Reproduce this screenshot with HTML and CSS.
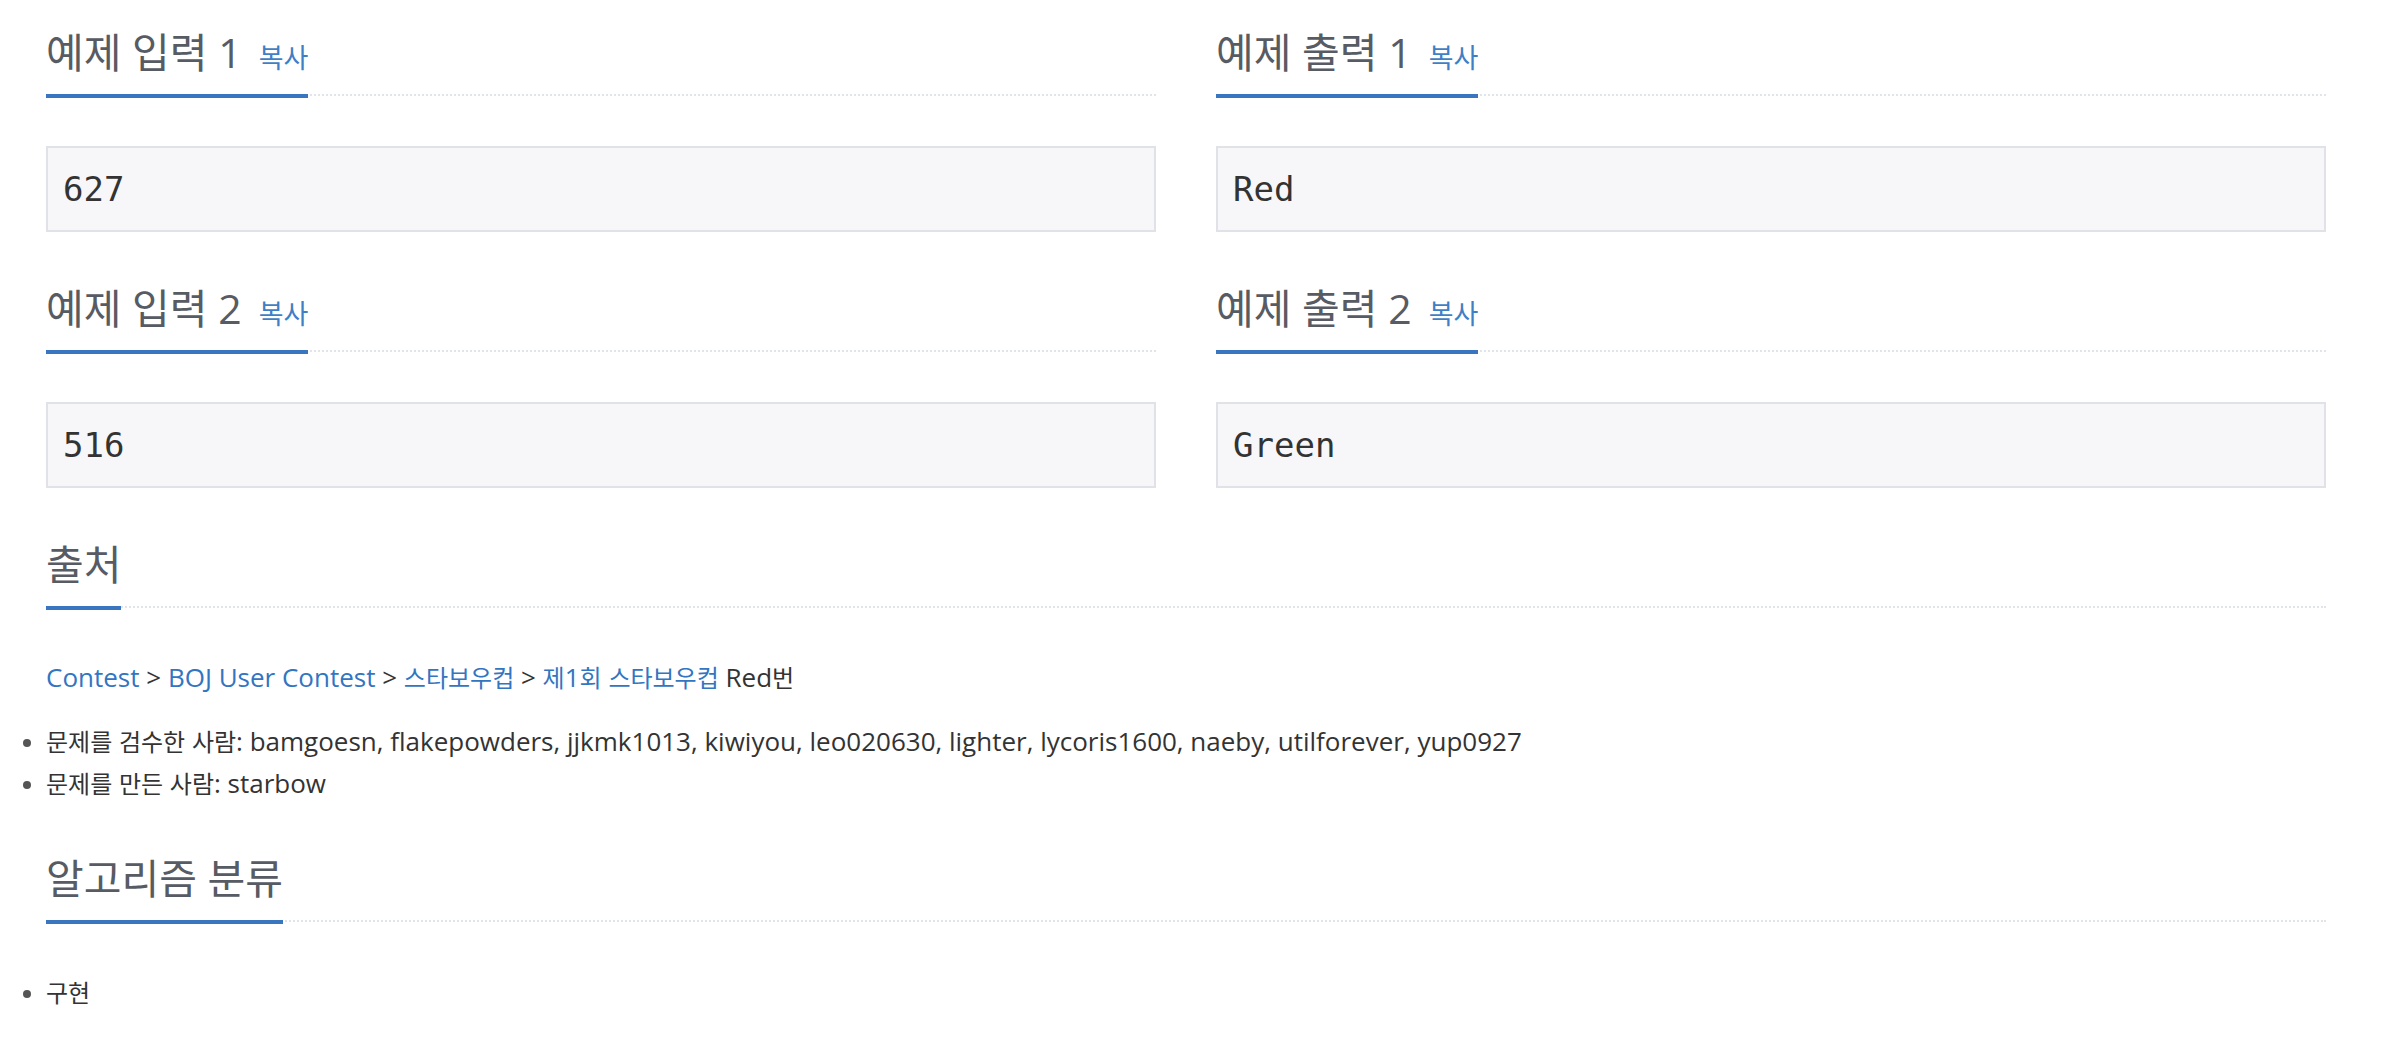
FILE: index.html
```html
<!DOCTYPE html>
<html lang="ko">
<head>
<meta charset="utf-8">
<title>예제</title>
<link rel="stylesheet" href="styles.css">
</head>
<body>
<div class="container">
  <div class="row">
    <section class="col">
      <div class="headline"><h2>예제 입력 1<a class="copy" href="#">복사</a></h2></div>
      <pre class="sample">627</pre>
    </section>
    <section class="col">
      <div class="headline"><h2>예제 출력 1<a class="copy" href="#">복사</a></h2></div>
      <pre class="sample">Red</pre>
    </section>
  </div>
  <div class="row">
    <section class="col">
      <div class="headline"><h2>예제 입력 2<a class="copy" href="#">복사</a></h2></div>
      <pre class="sample">516</pre>
    </section>
    <section class="col">
      <div class="headline"><h2>예제 출력 2<a class="copy" href="#">복사</a></h2></div>
      <pre class="sample">Green</pre>
    </section>
  </div>
  <section class="block">
    <div class="headline"><h2>출처</h2></div>
    <p class="source"><a href="#">Contest</a> &gt; <a href="#">BOJ User Contest</a> &gt; <a href="#"><span class="ko">스타보우컵</span></a> &gt; <a href="#"><span class="ko">제</span>1<span class="ko">회 스타보우컵</span></a> Red<span class="ko">번</span></p>
    <ul class="list">
      <li><span class="ko">문제를 검수한 사람</span>: bamgoesn, flakepowders, jjkmk1013, kiwiyou, leo020630, lighter, lycoris1600, naeby, utilforever, yup0927</li>
      <li><span class="ko">문제를 만든 사람</span>: starbow</li>
    </ul>
  </section>
  <section class="block">
    <div class="headline"><h2>알고리즘 분류</h2></div>
    <ul class="list tags">
      <li><span class="ko">구현</span></li>
    </ul>
  </section>
</div>
</body>
</html>
```
FILE: styles.css
```css
html, body {
  margin: 0;
  padding: 0;
  background: #ffffff;
}
body {
  font-family: "Open Sans", "Noto Sans CJK KR", sans-serif;
  font-size: 26px;
  line-height: 42px;
  color: #333333;
}
.container {
  width: 2340px;
  margin-left: 16px;
  padding: 30px 30px 0;
  box-sizing: border-box;
}
.row {
  display: grid;
  grid-template-columns: 1fr 1fr;
  column-gap: 60px;
  margin-bottom: 54px;
}
.col {
  min-width: 0;
}
.headline {
  display: flex;
  border-bottom: 2px dotted #e1e4e9;
  margin-bottom: 50px;
}
.headline h2 {
  margin: 0 0 -4px 0;
  padding-bottom: 20px;
  border-bottom: 4px solid #3a76bf;
  font-family: "Open Sans", "Noto Sans CJK KR", sans-serif;
  font-weight: normal;
  font-size: 41px;
  line-height: 44px;
  color: #575b63;
  white-space: nowrap;
}
.copy {
  margin-left: 17px;
  font-family: "Noto Sans CJK KR", sans-serif;
  font-size: 27px;
  line-height: 24px;
  color: #3f7fc6;
  text-decoration: none;
}
.sample {
  margin: 0;
  padding: 18px 15px;
  border: 2px solid #e1e1e8;
  background: #f7f7f9;
  font-family: "DejaVu Sans Mono", monospace;
  font-size: 34px;
  line-height: 46px;
  color: #333333;
}
.block {
  margin-bottom: 52px;
}
.ko {
  font-family: "Noto Sans CJK KR", sans-serif;
  font-size: 24px;
  line-height: 24px;
}
.source {
  margin: -2px 0 22px;
}
.source a {
  color: #3275c1;
  text-decoration: none;
}
.list {
  margin: 0;
  padding: 0;
  list-style: disc outside;
}
.list li::marker {
  color: #555555;
  font-size: 22px;
}
.tags {
  margin-top: -1px;
}
```
